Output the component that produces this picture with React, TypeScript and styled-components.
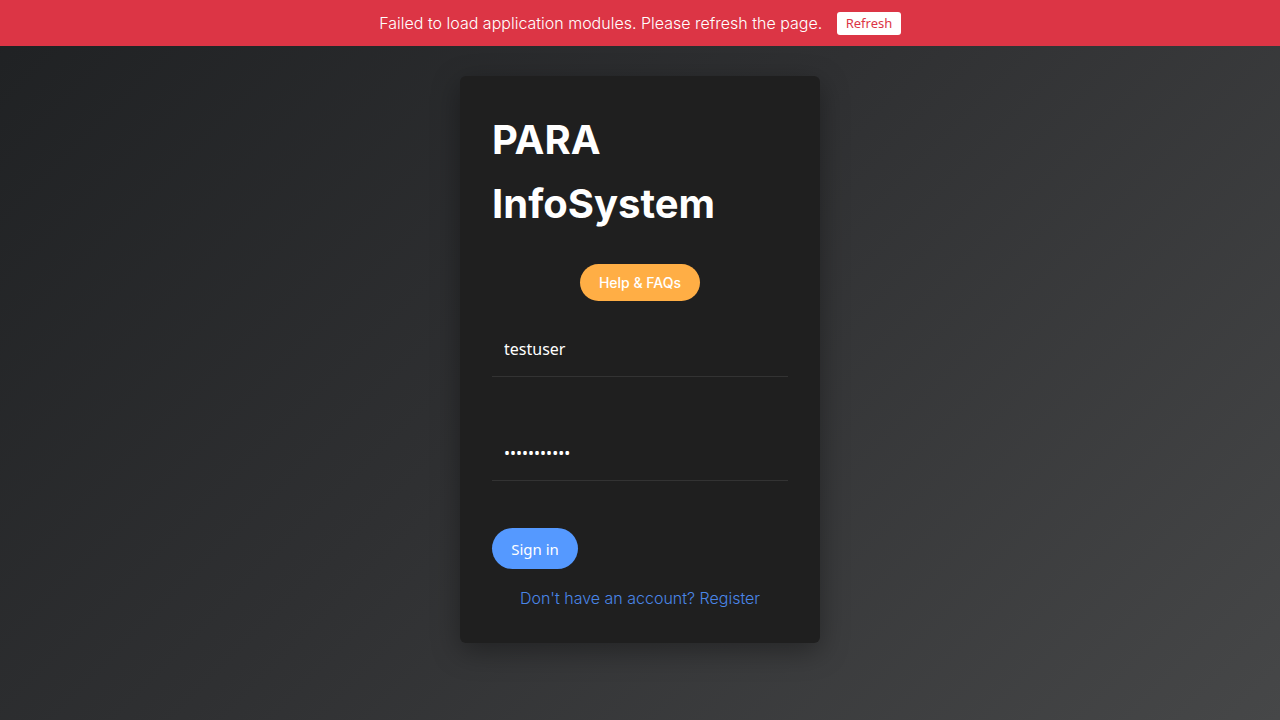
import React from "react";
import styled, { createGlobalStyle } from "styled-components";

const Global = createGlobalStyle`
  html, body { margin: 0; padding: 0; height: 100%; }
  body {
    font-family: Inter, "Noto Sans", sans-serif;
    background: linear-gradient(135deg, #1f2123 0%, #2f3032 45%, #464748 100%);
    min-height: 720px;
  }
  #root { min-height: 720px; }
`;

const Page = styled.div`
  display: flex;
  flex-direction: column;
  min-height: 720px;
`;

const Banner = styled.div`
  height: 46px;
  background: #dc3545;
  display: flex;
  align-items: center;
  justify-content: center;
  gap: 15px;
  color: #fff;
  font-family: Inter, sans-serif;
  font-weight: 300;
  font-size: 16px;
`;

const RefreshButton = styled.button`
  height: 23px;
  padding: 0 8.5px;
  background: #fff;
  color: #dc3545;
  border: none;
  border-radius: 3px;
  font-family: "Noto Sans", sans-serif;
  font-size: 13px;
  line-height: 23px;
  cursor: pointer;
`;

const Main = styled.main`
  display: flex;
  justify-content: center;
  padding-top: 30px;
`;

const Card = styled.div`
  width: 360px;
  box-sizing: border-box;
  padding: 32px 32px 34px;
  background: #1f1f1f;
  border-radius: 6px;
  box-shadow: 0 8px 28px rgba(0, 0, 0, 0.35);
  display: flex;
  flex-direction: column;
`;

const Title = styled.h1`
  margin: 0;
  color: #fff;
  font-family: Inter, sans-serif;
  font-weight: 700;
  font-size: 40px;
  line-height: 64px;
`;

const HelpButton = styled.button`
  align-self: center;
  margin-top: 28px;
  width: 120px;
  height: 37px;
  border: none;
  border-radius: 18.5px;
  background: #ffae45;
  color: #fff;
  font-family: Inter, sans-serif;
  font-weight: 500;
  font-size: 14px;
  cursor: pointer;
`;

const Field = styled.input<{ $gap: number }>`
  margin-top: ${(p) => p.$gap}px;
  height: 56px;
  box-sizing: border-box;
  padding: 0 12px;
  background: transparent;
  border: none;
  border-bottom: 1px solid #333;
  color: #fff;
  font-family: "Noto Sans", sans-serif;
  font-size: 16px;
  outline: none;
`;

const SignIn = styled.button`
  align-self: flex-start;
  margin-top: 47px;
  width: 86px;
  height: 41px;
  border: none;
  border-radius: 21px;
  background: #5599ff;
  color: #fff;
  font-family: "Noto Sans", sans-serif;
  font-size: 15px;
  cursor: pointer;
`;

const RegisterLink = styled.a`
  align-self: center;
  margin-top: 18px;
  color: #4a86e8;
  font-family: Inter, sans-serif;
  font-weight: 300;
  font-size: 16px;
  line-height: 22px;
  text-decoration: none;
`;

export default function App() {
  return (
    <Page>
      <Global />
      <Banner>
        <span>Failed to load application modules. Please refresh the page.</span>
        <RefreshButton>Refresh</RefreshButton>
      </Banner>
      <Main>
        <Card>
          <Title>PARA InfoSystem</Title>
          <HelpButton>Help &amp; FAQs</HelpButton>
          <Field $gap={20} type="text" defaultValue="testuser" />
          <Field $gap={48} type="password" defaultValue="testuser123" />
          <SignIn>Sign in</SignIn>
          <RegisterLink href="#">Don't have an account? Register</RegisterLink>
        </Card>
      </Main>
    </Page>
  );
}
